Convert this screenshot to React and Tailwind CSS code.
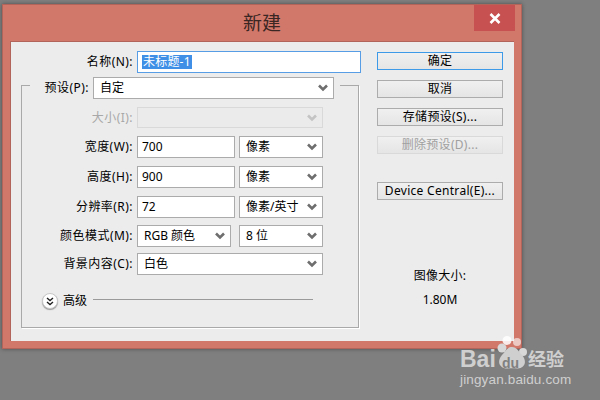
import React from 'react';

const Chevron = ({ disabled }) => (
  <svg width="10" height="8" viewBox="0 0 10 8" className="shrink-0">
    <path d="M1 1.5 L5 5.5 L9 1.5" fill="none" stroke={disabled ? '#c4c4c4' : '#6e6e6e'} strokeWidth="2.6" />
  </svg>
);

const Select = ({ value, className = '', disabled }) => (
  <div className={`flex items-center justify-between pl-[6px] pr-[5px] border leading-[16px] whitespace-nowrap ${disabled ? 'border-[#d9d9d9] bg-[#ebebeb]' : 'border-[#ababab] bg-white'} ${className}`}>
    <span>{value}</span>
    <Chevron disabled={disabled} />
  </div>
);

const Input = ({ value }) => (
  <div className="flex items-center w-[98px] h-[22px] pl-[4px] border border-[#ababab] bg-white">{value}</div>
);

const Label = ({ children, disabled }) => (
  <div className={`w-[111px] mr-[4px] text-right shrink-0 leading-[16px] tracking-[0.45px] ${disabled ? 'text-[#a8a8a8]' : ''}`}>{children}</div>
);

const Btn = ({ children, primary, disabled, className = '' }) => (
  <button className={`block w-[126px] h-[18px] leading-[16px] text-center tracking-[0.3px] border bg-gradient-to-b from-[#f0f0f0] to-[#e5e5e5] ${primary ? 'border-[#3c9ae8]' : disabled ? 'border-[#d9d9d9] text-[#a0a0a0]' : 'border-[#acacac]'} ${className}`}>
    {children}
  </button>
);

const Watermark = () => (
  <div className="absolute left-[460px] top-[336px] w-[110px] h-[54px] text-[#cfcfcf]">
    <div className="flex items-center h-[34px] pt-[13px]">
      <span className="font-['Liberation_Sans',sans-serif] font-bold text-[23px] leading-none">Bai</span>
      <svg width="32" height="34" viewBox="0 0 32 34" className="absolute left-[36px] top-0">
        <circle cx="11" cy="4.5" r="4.5" fill="#fff" fillOpacity="0.85" />
        <circle cx="21" cy="6" r="4" fill="#fff" fillOpacity="0.6" />
        <circle cx="6" cy="12" r="4.5" fill="#d8d8d8" />
        <circle cx="27" cy="16" r="4" fill="#d8d8d8" />
        <path d="M16 11 C21 11 22 15 26 19 C32 26 28 33 21 32.5 C18 32 15 32 12 32.5 C4 33 0 26 6 19 C10 15 11 11 16 11 Z" fill="#cfcfcf" />
      </svg>
      <span className="absolute left-[42px] top-[20px] font-['Liberation_Sans',sans-serif] font-bold text-[14px] leading-none text-[#808080]">du</span>
      <span className="absolute left-[68px] top-[13px] text-[18px] leading-[20px] font-bold">经验</span>
    </div>
    <div className="mt-[2px] font-['Liberation_Sans',sans-serif] text-[13.5px] leading-[16px] whitespace-nowrap tracking-[0.15px]">jingyan.baidu.com</div>
  </div>
);

export default function App() {
  return (
    <div className="relative w-[600px] h-[400px] overflow-hidden bg-[#7f7f7f] pt-[4px] pl-[2px] text-[12px] leading-none text-black font-['Noto_Sans','Noto_Sans_CJK_SC',sans-serif]">
      <div className="flex flex-col w-[520px] h-[345px] px-[7px] border border-[#b3645a] bg-[#d2786b] shadow-[0_0_4px_rgba(0,0,0,0.4)]">
        {/* title bar */}
        <div className="relative flex items-center justify-center h-[36px] shrink-0 text-[19px] leading-[24px] text-[#3a2623]">
          新建
          <div className="absolute right-[-1px] top-0 flex items-center justify-center w-[41px] h-[26px] bg-[#c75050]">
            <svg width="12" height="11" viewBox="0 0 12 11">
              <path d="M1.5 1 L10.5 10 M10.5 1 L1.5 10" stroke="#fff" strokeWidth="2.6" />
            </svg>
          </div>
        </div>

        {/* panel */}
        <div className="flex w-[504px] h-[300px] bg-[#ececec] border-t border-l border-[#b3645a]">
          <div className="w-[356px] shrink-0 pt-[9px] pl-[10px]">
            <div className="flex items-center h-[22px] ml-[1px]">
              <Label>名称(N):</Label>
              <div className="flex items-center w-[224px] h-[22px] pl-[4px] border border-[#569de5] bg-white">
                <span className="h-[14px] leading-[14px] px-[1px] bg-[#3f8fe6] text-white tracking-[0.2px]">未标题-1</span>
              </div>
            </div>

            {/* group box */}
            <div className="mt-[12px] w-[338px] h-[243px] border border-[#a9a9a9] shadow-[1px_1px_0_#fff]">
              <div className="flex items-center w-[310px] h-[22px] mt-[-9px] ml-[8px] bg-[#ececec]">
                <div className="w-[59px] mr-[4px] text-right shrink-0 leading-[16px] tracking-[0.45px]">预设(P):</div>
                <Select value="自定" className="w-[241px] h-[22px]" />
              </div>
              <div className="flex flex-col">
                <div className="flex items-center h-[21px] mt-[8px]">
                  <Label disabled>大小(I):</Label>
                  <Select disabled value="" className="w-[186px] h-[21px]" />
                </div>
                <div className="flex items-center h-[23px] mt-[7px]">
                  <Label>宽度(W):</Label>
                  <Input value="700" />
                  <Select value="像素" className="w-[84px] h-[22px] ml-[4px] mt-[1px]" />
                </div>
                <div className="flex items-center h-[23px] mt-[7px]">
                  <Label>高度(H):</Label>
                  <Input value="900" />
                  <Select value="像素" className="w-[84px] h-[22px] ml-[4px] mt-[1px]" />
                </div>
                <div className="flex items-center h-[23px] mt-[7px]">
                  <Label>分辨率(R):</Label>
                  <Input value="72" />
                  <Select value="像素/英寸" className="w-[84px] h-[22px] ml-[4px] mt-[1px]" />
                </div>
                <div className="flex items-center h-[22px] mt-[7px]">
                  <Label>颜色模式(M):</Label>
                  <Select value="RGB 颜色" className="w-[94px] h-[22px]" />
                  <Select value="8 位" className="w-[84px] h-[22px] ml-[8px]" />
                </div>
                <div className="flex items-center h-[22px] mt-[6px]">
                  <Label>背景内容(C):</Label>
                  <Select value="白色" className="w-[186px] h-[22px]" />
                </div>
                <div className="flex items-center h-[16px] mt-[18px] ml-[20px]">
                  <div className="flex items-center justify-center w-[16px] h-[16px] rounded-full bg-white border border-[#c8c8c8] shadow-[0_1px_1px_rgba(0,0,0,0.35)]">
                    <svg width="8" height="9" viewBox="0 0 8 9">
                      <path d="M1 1 L4 3.5 L7 1 M1 5 L4 7.5 L7 5" fill="none" stroke="#222" strokeWidth="1.4" />
                    </svg>
                  </div>
                  <span className="ml-[5px] leading-[16px]">高级</span>
                  <div className="w-[220px] h-px ml-[6px] mt-[-3px] bg-[#9a9a9a]" />
                </div>
              </div>
            </div>
          </div>

          {/* right column */}
          <div className="flex-1 pt-[10px] pl-[10px]">
            <Btn primary>确定</Btn>
            <Btn className="mt-[10px]">取消</Btn>
            <Btn className="mt-[10px]">存储预设(S)...</Btn>
            <Btn disabled className="mt-[10px]">删除预设(D)...</Btn>
            <Btn className="mt-[28px]">Device Central(E)...</Btn>
            <div className="w-[126px] mt-[69px] text-center leading-[14px] tracking-[0.3px]">图像大小:</div>
            <div className="w-[126px] mt-[10px] text-center leading-[14px]">1.80M</div>
          </div>
        </div>
      </div>
      <Watermark />
    </div>
  );
}
